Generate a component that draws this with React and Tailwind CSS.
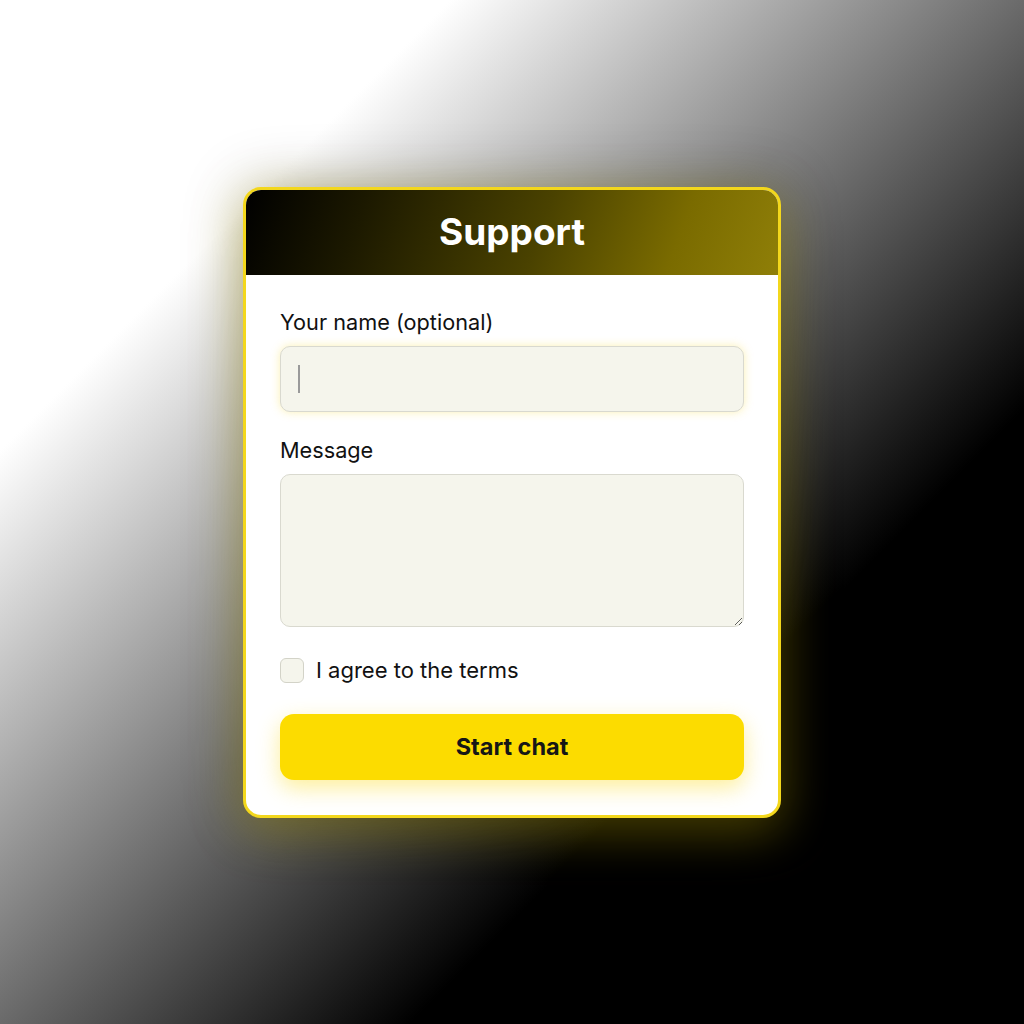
import React from 'react';

const fieldClass =
  "w-full rounded-[10px] border border-[#d9d9cf] bg-[#f5f5ec] px-4 text-[20px] text-[#111111] outline-none";

export default function App() {
  return (
    <div
      className="min-h-screen w-full flex items-center justify-center pb-[20px] bg-[linear-gradient(135deg,#ffffff_0%,#ffffff_22%,#000000_70%,#000000_100%)]"
      style={{ fontFamily: "Inter, 'Noto Sans', sans-serif" }}
    >
      <div className="w-[538px] rounded-[18px] border-[3px] border-[#f3d71c] bg-white overflow-hidden shadow-[0_0_60px_rgba(0,0,0,0.3),0_12px_50px_rgba(250,220,0,0.35)]">
        <div className="h-[85px] flex items-center justify-center bg-[linear-gradient(110deg,#000000_0%,#1c1900_22%,#4a4200_55%,#7a6b00_80%,#8f7f08_100%)]">
          <h1 className="text-[37px] font-bold text-white leading-none pb-[2px]">Support</h1>
        </div>

        <div className="px-[34px] pt-[33px] pb-[35px] flex flex-col">
          <label className="text-[21.7px] leading-[28px] text-[#111111]">Your name (optional)</label>
          <div className="relative mt-[10px]">
            <input
              type="text"
              className={`${fieldClass} h-[66px] shadow-[0_0_10px_rgba(245,215,40,0.35)]`}
            />
            <span className="absolute left-[18px] top-[19px] h-[28px] w-[2px] bg-[#9a9a9a] pointer-events-none" />
          </div>

          <label className="mt-[24px] text-[21.7px] leading-[28px] text-[#111111]">Message</label>
          <textarea className={`${fieldClass} mt-[10px] h-[153px] py-3 block`} />

          <label className="mt-[31px] flex items-center gap-[12px] h-[25px]">
            <span className="w-[24px] h-[25px] rounded-[6px] border border-[#d3d3c8] bg-[#f5f5ec] shrink-0" />
            <span className="text-[22px] text-[#111111] leading-none">I agree to the terms</span>
          </label>

          <button className="mt-[31px] h-[66px] w-full rounded-[14px] bg-[#fcdc00] text-[23.5px] font-bold text-[#161616] shadow-[0_8px_22px_rgba(250,215,0,0.4)]">
            Start chat
          </button>
        </div>
      </div>
    </div>
  );
}
